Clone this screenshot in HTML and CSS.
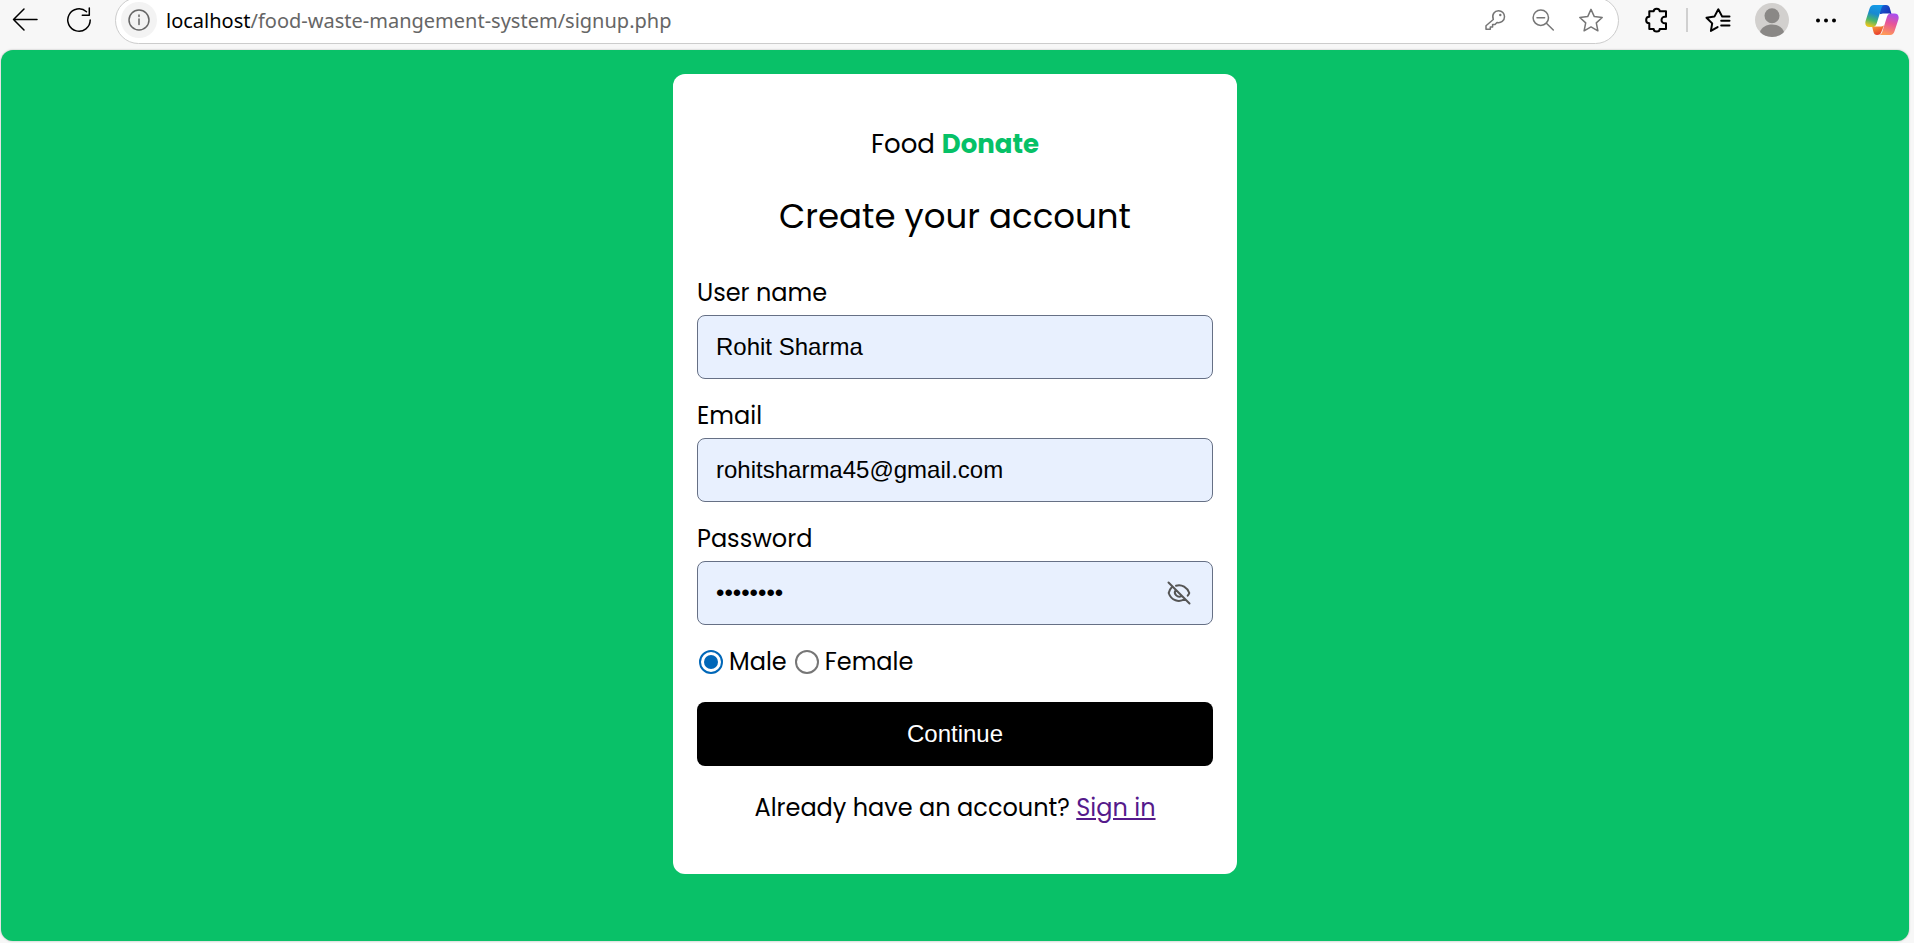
FILE: index.html
```html
<!DOCTYPE html>
<html lang="en">
<head>
<meta charset="utf-8">
<title>Create your account</title>
<link rel="stylesheet" href="styles.css">
</head>
<body>
<header class="toolbar">
  <button class="tool" type="button" aria-label="Back">
    <svg class="icon" viewBox="0 0 28 28"><path d="M26 13.500H2.500M13 3 2.500 13.500 13 24"/></svg>
  </button>
  <button class="tool" type="button" aria-label="Refresh">
    <svg class="icon" viewBox="0 0 28 28"><path d="M21.500 5.700A11.200 11.200 0 1 0 25.200 14M24.300 2v7.300h-7"/></svg>
  </button>
  <div class="address">
    <button class="site-info" type="button" aria-label="Site information">
      <svg class="icon" viewBox="0 0 28 28"><circle cx="14" cy="14" r="10"/><path d="M14 13v5.500M14 9v1.600"/></svg>
    </button>
    <span class="url"><span class="host">localhost</span>/food-waste-mangement-system/signup.php</span>
    <div class="address-tools">
      <button class="small-tool" type="button" aria-label="Passwords">
        <svg class="icon" viewBox="0 0 28 28"><path d="M12.300 13.500C10.500 8.500 13.500 4.700 17.500 4.700c3.700 0 6 2.800 6 6 0 4-3.500 6.600-7.500 5.800l-2 2.100h-2.400v2.500H9.300v2.200H5v-3.600z"/><circle class="dot" cx="19.300" cy="9" r="1.200"/></svg>
      </button>
      <button class="small-tool" type="button" aria-label="Zoom out">
        <svg class="icon" viewBox="0 0 28 28"><circle cx="11.800" cy="11.700" r="7.700"/><path d="M17.400 17.300 24.300 24M8 11.700h7.600"/></svg>
      </button>
      <button class="small-tool" type="button" aria-label="Add to favorites">
        <svg class="icon" viewBox="0 0 28 28"><path d="m14 3.400 3.300 7.200 7.900.9-5.900 5.400 1.600 7.900-6.900-3.900-6.900 3.900 1.600-7.900-5.900-5.400 7.900-.9z"/></svg>
      </button>
    </div>
  </div>
  <button class="tool" type="button" aria-label="Extensions">
    <svg class="icon heavy" viewBox="0 0 28 28"><path d="M7.300 5.300h4.400c0-3.400 6-3.400 6 0H24v5.400h-1.200a3.300 3.300 0 0 0 0 6.600H24V23h-6.300c0 3.400-6 3.400-6 0H7.300v-5.700c-4.200 0-4.200-6.600 0-6.600z"/></svg>
  </button>
  <span class="divider"></span>
  <button class="tool" type="button" aria-label="Favorites">
    <svg class="icon heavy" viewBox="0 0 28 28"><path d="M25.500 10.600h-7.300L14.300 3.300l-3.900 7.300-7.900 1.200 5.700 5.600-1.300 7.500 6.700-3.800M17.200 14.800h8.300M17.200 19.500h8.300"/></svg>
  </button>
  <button class="tool" type="button" aria-label="Profile">
    <svg class="avatar" viewBox="0 0 34 34"><circle cx="17" cy="17" r="17" fill="#d2d0ce"/><circle cx="17" cy="12.700" r="7.500" fill="#8a8886"/><path d="M5 29c3-10 21-10 24 0-6 6.500-18 6.500-24 0z" fill="#8a8886"/></svg>
  </button>
  <button class="tool" type="button" aria-label="Settings and more">
    <svg class="icon dots" viewBox="0 0 28 28"><circle cx="6" cy="14.500" r="2"/><circle cx="14" cy="14.500" r="2"/><circle cx="22" cy="14.500" r="2"/></svg>
  </button>
  <button class="tool copilot-tool" type="button" aria-label="Copilot">
    <svg class="avatar" viewBox="0 0 34 34">
      <defs>
        <linearGradient id="cool" x1=".6" y1="0" x2=".3" y2="1"><stop offset="0" stop-color="#149be8"/><stop offset=".4" stop-color="#1889d0"/><stop offset=".7" stop-color="#48b66b"/><stop offset="1" stop-color="#ecc51c"/></linearGradient>
        <linearGradient id="warm" x1=".7" y1="0" x2=".4" y2="1"><stop offset="0" stop-color="#a84df0"/><stop offset=".45" stop-color="#e75499"/><stop offset="1" stop-color="#ff9a55"/></linearGradient>
        <linearGradient id="fold" x1="0" y1="0" x2="1" y2=".6"><stop offset="0" stop-color="#1268d8"/><stop offset="1" stop-color="#1b32b5"/></linearGradient>
        <linearGradient id="ember" x1="0" y1="0" x2=".4" y2="1"><stop offset="0" stop-color="#f9a23a"/><stop offset="1" stop-color="#e9402f"/></linearGradient>
      </defs>
      <path fill="url(#fold)" d="M14 2h7c2 0 3.200 1 3.800 3l1.700 6H15z"/>
      <path fill="url(#ember)" d="M19 22.500 16.500 28.500c-.7 2.500-2 3.500-4.500 3.500-2 0-3-1-3.500-3l-1.700-6.500z"/>
      <path fill="#fff" d="M14.500 13.500c.6-2 1.500-3 3.500-3h7l-5.500 10c-.6 2-1.500 3-3.500 3H9z"/>
      <path fill="url(#cool)" d="M9 2h11c-2.200 0-3.100 1.500-3.700 3.500l-4.600 15C10.800 23 9.700 24 7 24H4.500C1 24-.3 21.500.6 18L4.400 6C5.200 3.400 6.500 2 9 2z"/>
      <path fill="url(#warm)" d="M25 32H13.500c2.200 0 3.200-1.400 3.900-3.500l4.500-14.500c.8-2.500 2-3.500 4.500-3.500h3c3.500 0 4.900 2.500 4 6l-3.800 11.500C28.800 30.600 27.500 32 25 32z"/>
    </svg>
  </button>
</header>
<main class="page">
  <form class="card">
    <p class="logo">Food <b>Donate</b></p>
    <h1 class="heading">Create your account</h1>
    <div class="field">
      <label for="name">User name</label>
      <input class="box" id="name" type="text" value="Rohit Sharma">
    </div>
    <div class="field">
      <label for="email">Email</label>
      <input class="box" id="email" type="email" value="rohitsharma45@gmail.com">
    </div>
    <div class="field">
      <label for="password">Password</label>
      <div class="password">
        <input class="box" id="password" type="password" value="rohit123">
        <button class="reveal" type="button" aria-label="Show password">
          <svg class="eye" viewBox="0 0 24 24"><path d="M1.500 1.500 22.500 22.500M9 4.700c6-1.700 11.200 1.800 13.300 7.300-.4 1-.9 1.900-1.600 2.700M5.200 5.700C3.500 7.300 2.300 9.400 1.700 12c2.500 7.500 10.300 10 16 6M8.700 9.200c-2.700 3.500 2 8.400 6 5.800"/></svg>
        </button>
      </div>
    </div>
    <div class="gender">
      <input id="male" type="radio" name="gender" checked><label for="male">Male</label>
      <input id="female" type="radio" name="gender"><label for="female">Female</label>
    </div>
    <button class="submit" type="submit">Continue</button>
    <p class="signin">Already have an account? <a href="#signin">Sign in</a></p>
  </form>
</main>
</body>
</html>
```
FILE: styles.css
```css
* {
  box-sizing: border-box;
}

body {
  margin: 0;
  min-height: 100vh;
  display: flex;
  flex-direction: column;
  background: #f7f7f7;
  color: #000;
  font-family: Poppins, Inter, sans-serif;
  font-size: 24px;
}

button {
  padding: 0;
  border: 0;
  background: none;
  color: inherit;
}

.toolbar {
  display: flex;
  align-items: center;
  gap: 10px;
  height: 50px;
  padding: 0 10px 10px 3px;
  overflow: hidden;
}

.tool {
  display: grid;
  place-items: center;
  flex: none;
  width: 44px;
  height: 40px;
}

.icon {
  display: block;
  width: 28px;
  height: 28px;
  fill: none;
  stroke: currentColor;
  stroke-width: 1.5;
  stroke-linecap: round;
  stroke-linejoin: round;
}

.heavy {
  stroke-width: 2;
}

.dots,
.dot {
  fill: currentColor;
  stroke: none;
}

.avatar {
  display: block;
  width: 34px;
  height: 34px;
}

.copilot-tool {
  margin-left: 2px;
}

.divider {
  width: 2px;
  height: 24px;
  margin: 0 -2px;
  background: #d0d0d0;
}

.address {
  display: flex;
  flex: 1;
  align-items: center;
  gap: 9px;
  height: 47px;
  margin: 0 5px 0 4px;
  padding: 0 13px 0 5px;
  border: 1px solid #ccc;
  border-radius: 24px;
  background: #fff;
  color: #666;
}

.site-info {
  display: grid;
  place-items: center;
  width: 36px;
  height: 36px;
  border-radius: 50%;
  background: #f3f3f3;
}

.url {
  flex: 1;
  font-family: "Segoe UI", "Noto Sans", sans-serif;
  font-size: 20px;
  white-space: nowrap;
}

.host {
  color: #000;
}

.address-tools {
  display: flex;
  gap: 20px;
  color: #767676;
}

.page {
  flex: 1;
  margin: 0 5px 2px 1px;
  padding: 24px;
  border-radius: 12px;
  background: #09c168;
  box-shadow: 0 0 2px #aaa;
}

.card {
  max-width: 564px;
  margin: 0 auto;
  padding: 48px 24px;
  border-radius: 12px;
  background: #fff;
}

.logo {
  margin: 0;
  font-size: 26px;
  line-height: 44px;
  text-align: center;
}

.logo b {
  color: #06c167;
}

.heading {
  margin: 24px 0 33px;
  font-size: 34px;
  font-weight: 400;
  line-height: 52px;
  text-align: center;
}

.field {
  margin-bottom: 19px;
}

.field label {
  display: block;
  padding-bottom: 4px;
  line-height: 36px;
}

.box {
  display: block;
  width: 100%;
  height: 64px;
  padding: 0 18px;
  border: 1px solid #667085;
  border-radius: 8px;
  background: #e8f0fe;
  color: #000;
  font-family: "Liberation Sans", Arial, sans-serif;
  font-size: 24px;
}

.password {
  position: relative;
}

.reveal {
  position: absolute;
  top: 0;
  right: 22px;
  height: 100%;
  color: #555;
}

.eye {
  display: block;
  width: 24px;
  height: 24px;
  fill: none;
  stroke: currentColor;
  stroke-width: 2;
  stroke-linecap: round;
}

.gender {
  display: flex;
  align-items: center;
  line-height: 36px;
}

.gender input {
  appearance: none;
  width: 24px;
  height: 24px;
  margin: 0 6px 0 2px;
  border: 2px solid #767676;
  border-radius: 50%;
  background: #fff;
}

.gender input:checked {
  padding: 3px;
  border-color: #0067b8;
  background: #0067b8 content-box;
}

.gender label {
  margin-right: 6px;
}

.submit {
  display: block;
  width: 100%;
  height: 64px;
  margin-top: 22px;
  border-radius: 8px;
  background: #000;
  color: #fff;
  font-family: "Liberation Sans", Arial, sans-serif;
  font-size: 24px;
}

.signin {
  margin: 24px 0 0;
  line-height: 36px;
  text-align: center;
}

.signin a {
  color: #551a8b;
}
```
